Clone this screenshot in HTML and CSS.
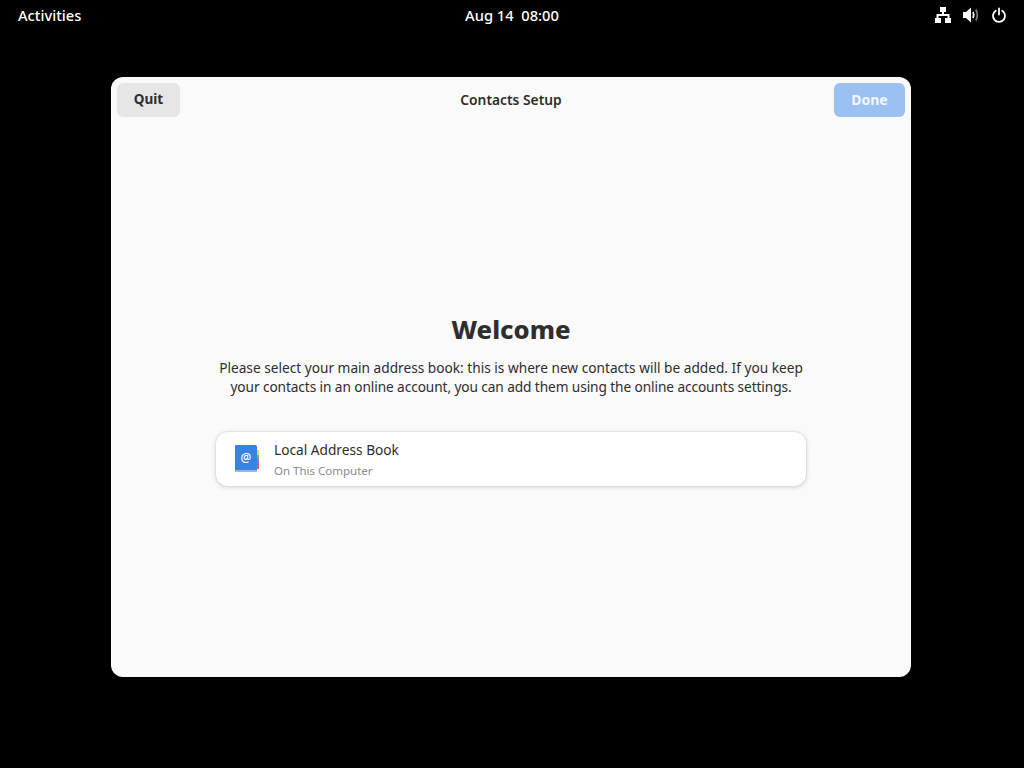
FILE: index.html
```html
<!DOCTYPE html>
<html lang="en">
<head>
  <meta charset="UTF-8">
  <title>Contacts Setup</title>
  <meta name="viewport" content="width=device-width, initial-scale=1.0">
  <link rel="stylesheet" href="styles.css">
</head>
<body>
  <div class="panel">
    <div class="panel-left">Activities</div>
    <div class="panel-clock">Aug 14&nbsp;&nbsp;08:00</div>
    <div class="panel-icons">
      <svg width="16" height="16" viewBox="0 0 16 16"><path fill="#fff" d="M5 0h6v5H9v2h5.500v4H16v5h-6v-5h2.500V9h-9v2H6v5H0v-5h1.500V7H7V5H5z"/></svg>
      <svg width="16" height="16" viewBox="0 0 16 16"><path fill="#fff" d="M0 5h3l5-4.500v15L3 11H0z"/><path fill="none" stroke="#fff" stroke-width="1.700" d="M10 5q1.500 3 0 6"/><path fill="none" stroke="#7c7c7c" stroke-width="1.700" d="M12.800 2.500q3 5.500 0 11"/></svg>
      <svg width="16" height="16" viewBox="0 0 16 16"><path fill="none" stroke="#fff" stroke-width="1.800" stroke-linecap="round" d="M8 1.500v6M4.800 3.800a6 6 0 1 0 6.400 0"/></svg>
    </div>
  </div>

  <div class="window">
    <div class="headerbar">
      <div class="header-start"><button class="btn btn-quit">Quit</button></div>
      <div class="title">Contacts Setup</div>
      <div class="header-end"><button class="btn btn-done">Done</button></div>
    </div>
    <div class="content">
      <h1>Welcome</h1>
      <p class="intro">Please select your main address book: this is where new contacts will be added. If you keep <span class="intro-tight">your contacts in an online account, you can add them using the online accounts settings.</span></p>
      <div class="book-list">
        <div class="book-row">
          <svg class="book-icon" width="26" height="30" viewBox="0 0 26 30">
            <rect x="22" y="6" width="3" height="5" fill="#f6d32d"/>
            <rect x="22" y="11" width="3" height="4" fill="#57c555"/>
            <rect x="22" y="15" width="3" height="4" fill="#a56ac8"/>
            <rect x="22" y="19" width="3" height="6" fill="#ed5b50"/>
            <path fill="#9ab8de" d="M1 25h22v3H1z"/>
            <path fill="#3584e4" d="M2 1h19a2 2 0 0 1 2 2v23H1V2a1 1 0 0 1 1-1z"/>
            <text class="book-at" x="12" y="17.500" text-anchor="middle">@</text>
          </svg>
          <div class="book-text">
            <div class="book-name">Local Address Book</div>
            <div class="book-place">On This Computer</div>
          </div>
        </div>
      </div>
    </div>
  </div>
</body>
</html>
```

FILE: styles.css
```css
body {
  font-family: "Noto Sans", "Open Sans", sans-serif;
  background-color: #000;
  margin: 0;
  height: 768px;
  overflow: hidden;
}

.panel {
  display: grid;
  grid-template-columns: 1fr auto 1fr;
  align-items: center;
  height: 30px;
  padding: 0 18px;
  color: #fff;
  font-size: 14.7px;
  font-weight: 500;
}

.panel-left,
.panel-clock {
  margin-top: -1px;
}

.panel-icons {
  display: flex;
  justify-content: flex-end;
  gap: 12px;
  margin-right: -1px;
}

.window {
  display: flex;
  flex-direction: column;
  width: 800px;
  height: 600px;
  margin: 47px 0 0 111px;
  background: #fafafa;
  border-radius: 12px;
  color: #2e2e2e;
}

.headerbar {
  display: grid;
  grid-template-columns: 1fr auto 1fr;
  align-items: center;
  padding: 6px;
}

.header-end {
  text-align: right;
}

.title {
  margin-top: -2px;
  font-size: 13.8px;
  font-weight: 600;
}

.btn {
  height: 34px;
  padding: 0 0 2px;
  border: 0;
  border-radius: 6px;
  font-family: inherit;
  font-size: 14px;
  font-weight: 700;
}

.btn-quit {
  width: 63px;
  background: #e6e6e6;
  color: #2e2e2e;
  font-size: 13.5px;
}

.btn-done {
  width: 71px;
  background: #9ac1f1;
  color: #f3f7fc;
}

.content {
  display: flex;
  flex-direction: column;
  align-items: center;
  padding-top: 189px;
}

h1 {
  margin: 0;
  font-size: 25.6px;
  line-height: 36px;
  font-weight: 800;
  color: #2e2e2e;
}

.intro {
  width: 600px;
  margin: 10px 0 0;
  font-size: 13.68px;
  line-height: 19px;
  text-align: center;
}

.intro-tight {
  letter-spacing: -0.09px;
}

.book-list {
  width: 590px;
  margin-top: 36px;
  background: #fff;
  border-radius: 12px;
  box-shadow: 0 0 0 1px rgba(0,0,0,0.04), 0 1px 4px 1px rgba(0,0,0,0.12);
}

.book-row {
  display: flex;
  align-items: center;
  height: 54px;
  padding: 0 18px;
  gap: 14px;
}

.book-icon {
  flex: none;
}

.book-at {
  fill: #fff;
  font-size: 12px;
  font-weight: 500;
}

.book-name {
  font-size: 13.7px;
  line-height: 19px;
}

.book-place {
  margin-top: 4px;
  font-size: 11.5px;
  line-height: 16px;
  color: #8a8a8a;
}
```
